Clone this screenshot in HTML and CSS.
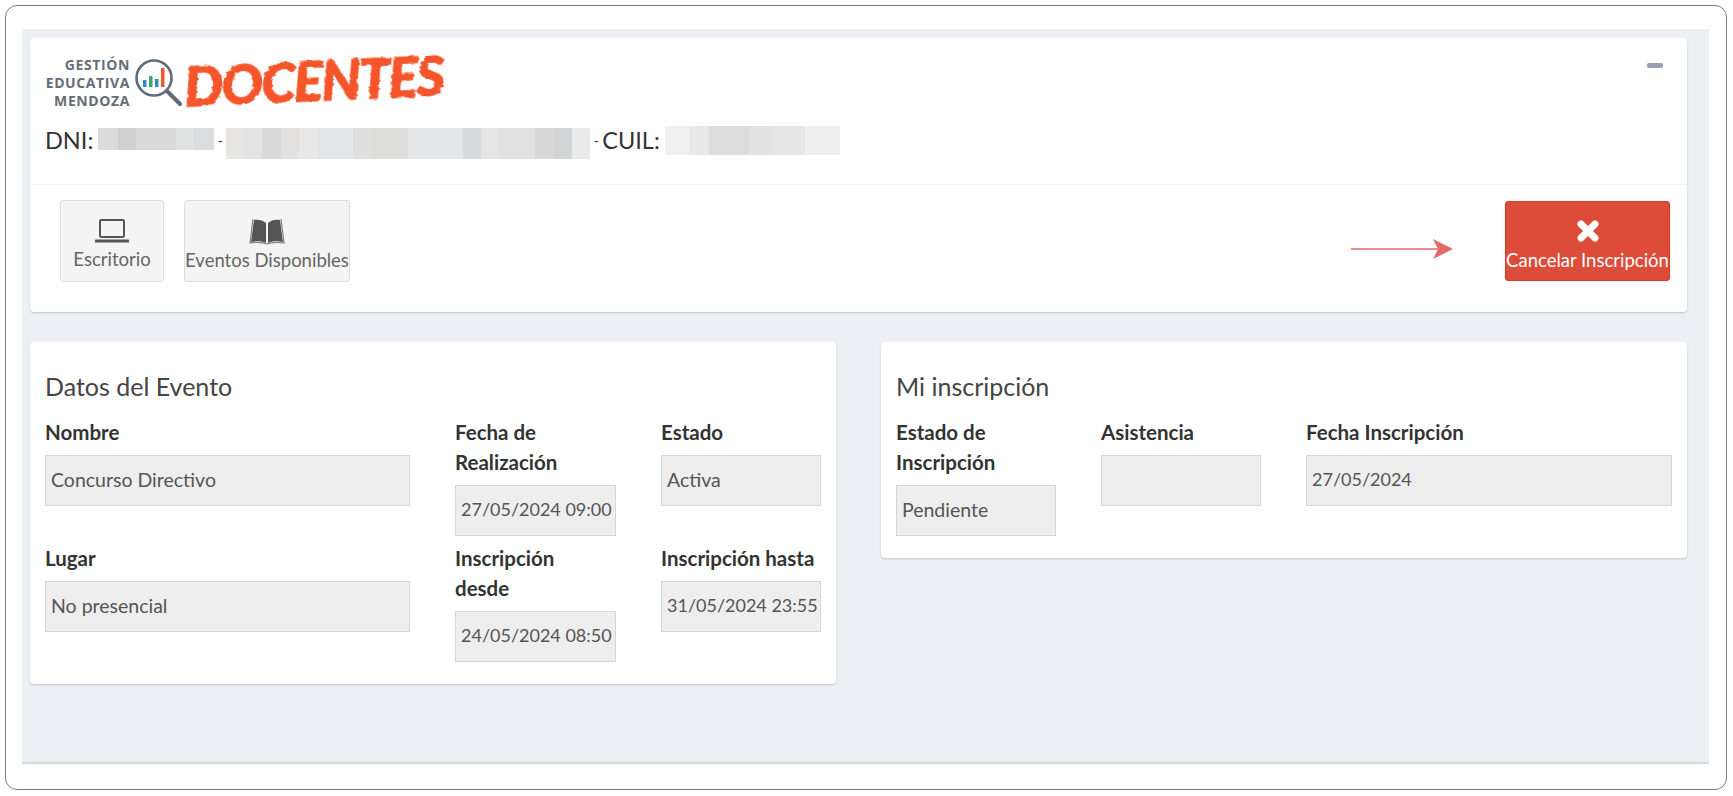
FILE: index.html
```html
<!DOCTYPE html>
<html lang="es">
<head>
    <meta charset="UTF-8">
    <title>Mi inscripción</title>
    <link rel="stylesheet" href="styles.css">
</head>
<body>
    <svg class="defs" width="0" height="0">
        <filter id="brush" x="-5%" y="-10%" width="110%" height="120%">
            <feTurbulence type="fractalNoise" baseFrequency="0.09 0.28" numOctaves="2" seed="4"/>
            <feDisplacementMap in="SourceGraphic" scale="3.5"/>
        </filter>
    </svg>

    <div class="frame">
        <div class="content">
            <div class="card">
                <div class="card-header">
                    <button class="collapse" aria-label="Minimizar"></button>
                    <div class="logo">
                        <div class="logo-text">GESTIÓN<br>EDUCATIVA<br>MENDOZA</div>
                        <svg class="logo-icon" width="50" height="50" viewBox="0 0 50 50">
                            <circle cx="20" cy="21" r="17.5" fill="none" stroke="#5f6b78" stroke-width="2.6"/>
                            <path d="M33 34 L46 47" stroke="#5f6b78" stroke-width="4" stroke-linecap="round"/>
                            <rect x="9" y="23" width="3.5" height="7" fill="#2f8fc4"/>
                            <rect x="15" y="19" width="3.5" height="11" fill="#3aa76d"/>
                            <rect x="21" y="22" width="3.5" height="8" fill="#2f8fc4"/>
                            <rect x="27" y="11" width="3.5" height="19" fill="#ef5a2a"/>
                        </svg>
                        <div class="logo-brand">DOCENTES</div>
                    </div>
                    <div class="person">
                        <span>DNI:</span>
                        <i class="blur blur-dni"></i>
                        <span class="dash">-</span>
                        <i class="blur blur-name"></i>
                        <span class="dash">-</span>
                        <span>CUIL:</span>
                        <i class="blur blur-cuil"></i>
                    </div>
                </div>
                <div class="toolbar">
                    <a class="btn btn-escritorio">
                        <svg width="34" height="26" viewBox="0 0 34 26">
                            <rect x="5" y="2" width="24" height="17" rx="1.5" fill="none" stroke="#555" stroke-width="2"/>
                            <path d="M1 23 H33" stroke="#555" stroke-width="3" stroke-linecap="round"/>
                        </svg>
                        Escritorio
                    </a>
                    <a class="btn btn-eventos">
                        <svg width="36" height="28" viewBox="0 0 36 28">
                            <path d="M17 6 C14 3 9 2 5 3 L2 25 C7 24 13 24 17 26 Z M19 6 C22 3 27 2 31 3 L34 25 C29 24 23 24 19 26 Z" fill="#555"/>
                            <path d="M4 2 L1 26 C7 25 13 25 18 27 C23 25 29 25 35 26 L32 2" stroke="#8f8072" stroke-width="1.2" fill="none"/>
                        </svg>
                        Eventos Disponibles
                    </a>
                    <svg class="arrow" width="104" height="24" viewBox="0 0 104 24">
                        <path d="M1 12 H90" stroke="#e36b6b" stroke-width="1.6"/>
                        <path d="M83 2 L103 12 L83 22 L88 12 Z" fill="#e36b6b"/>
                    </svg>
                    <a class="btn btn-cancelar">
                        <svg width="24" height="24" viewBox="0 0 24 24">
                            <path d="M5 5 L19 19 M19 5 L5 19" stroke="#fff" stroke-width="7" stroke-linecap="round"/>
                        </svg>
                        Cancelar Inscripción
                    </a>
                </div>
            </div>

            <div class="columns">
                <div class="card panel">
                    <h3>Datos del Evento</h3>
                    <div class="fields fields-evento">
                        <div class="field">
                            <label>Nombre</label>
                            <div class="value">Concurso Directivo</div>
                        </div>
                        <div class="field">
                            <label>Fecha de Realización</label>
                            <div class="value value-date">27/05/2024 09:00</div>
                        </div>
                        <div class="field">
                            <label>Estado</label>
                            <div class="value">Activa</div>
                        </div>
                        <div class="field">
                            <label>Lugar</label>
                            <div class="value">No presencial</div>
                        </div>
                        <div class="field">
                            <label>Inscripción<br>desde</label>
                            <div class="value value-date">24/05/2024 08:50</div>
                        </div>
                        <div class="field">
                            <label>Inscripción hasta</label>
                            <div class="value value-date">31/05/2024 23:55</div>
                        </div>
                    </div>
                </div>

                <div class="card panel">
                    <h3>Mi inscripción</h3>
                    <div class="fields fields-inscripcion">
                        <div class="field">
                            <label>Estado de Inscripción</label>
                            <div class="value">Pendiente</div>
                        </div>
                        <div class="field">
                            <label>Asistencia</label>
                            <div class="value"></div>
                        </div>
                        <div class="field">
                            <label>Fecha Inscripción</label>
                            <div class="value value-date">27/05/2024</div>
                        </div>
                    </div>
                </div>
            </div>
        </div>
    </div>
</body>
</html>
```

FILE: styles.css
```css
* {
    box-sizing: border-box;
}

body {
    margin: 0;
    font-family: Lato, "Open Sans", sans-serif;
    color: #333;
    background-color: #fff;
}

.defs {
    position: absolute;
}

.frame {
    display: flex;
    flex-direction: column;
    height: 785px;
    margin: 5px 6px 6px 5px;
    padding: 23px 17px 25px 16px;
    border: 1px solid #7d7d7d;
    border-radius: 12px;
}

.content {
    flex: 1;
    padding: 9px 22px 0 8px;
    background-color: #ecf0f5;
    border-bottom: 2px solid #d5d9e0;
}

.card {
    background-color: #fff;
    border-radius: 4px;
    box-shadow: 0 1px 2px rgba(0,0,0,0.18);
}

.card-header {
    position: relative;
    height: 147px;
    padding: 12px 15px 0;
    border-bottom: 1px solid #f2f2f2;
}

.collapse {
    position: absolute;
    top: 25px;
    right: 24px;
    width: 16px;
    height: 5px;
    padding: 0;
    border: none;
    border-radius: 2px;
    background-color: #97a0b3;
}

.logo {
    display: flex;
    align-items: center;
    height: 60px;
}

.logo-text {
    width: 85px;
    margin-top: 5px;
    font-family: "Open Sans", sans-serif;
    font-size: 14px;
    font-weight: 700;
    line-height: 18px;
    letter-spacing: 0.6px;
    text-align: right;
    white-space: nowrap;
    color: #666d78;
}

.logo-icon {
    margin: 4px 0 0 4px;
}

.logo-brand {
    margin-left: 0;
    font-family: Lato, sans-serif;
    font-size: 55px;
    font-weight: 900;
    font-style: italic;
    line-height: 60px;
    letter-spacing: -1.7px;
    color: #f4552a;
    -webkit-text-stroke: 1px #f4552a;
    transform: rotate(-2.5deg);
    filter: url(#brush);
}

.person {
    display: flex;
    align-items: flex-start;
    height: 35px;
    margin-top: 13px;
    font-size: 23.5px;
    line-height: 35px;
    color: #333;
}

.dash {
    width: 12px;
    font-size: 14px;
    text-align: center;
}

.blur {
    display: block;
    margin-top: 5px;
}

.blur-dni {
    width: 116px;
    height: 22px;
    margin-left: 5px;
    background: linear-gradient(90deg, #dbdbdb 0 17%, #cfcfcf 17% 33%, #dadada 33% 67%, #e0e2e2 67% 83%, #dcdde0 83%);
}

.blur-name {
    width: 364px;
    height: 31px;
    background: linear-gradient(90deg, #e8e6e4 0 5%, #e2e3e5 5% 10%, #d9d9da 10% 15%, #e3e1e0 15% 20%, #e8e8e8 20% 25%, #e4e5e6 25% 35%, #dfdfdf 35% 40%, #dddddc 40% 50%, #e4e6e8 50% 65%, #d9dadb 65% 70%, #e5e5e5 70% 75%, #e1e1e1 75% 85%, #d7d7d7 85% 90%, #d3d4d6 90% 95%, #eaeaea 95%);
}

.blur-cuil {
    width: 175px;
    height: 29px;
    margin-top: 3px;
    margin-left: 5px;
    background: linear-gradient(90deg, #f0f0f0 0 14%, #e8e8e8 14% 25%, #dcdcdc 25% 48%, #e2e2e2 48% 62%, #e6e6e6 62% 80%, #efefef 80%);
}

.toolbar {
    display: flex;
    align-items: center;
    height: 127px;
    padding: 0 17px 15px 30px;
}

.btn {
    display: flex;
    flex-direction: column;
    align-items: center;
    justify-content: center;
    gap: 3px;
    height: 82px;
    padding-top: 7px;
    font-size: 18.5px;
    line-height: 24px;
    white-space: nowrap;
    color: #666;
    background-color: #f4f4f4;
    border: 1px solid #ddd;
    border-radius: 3px;
}

.btn-escritorio {
    width: 104px;
}

.btn-eventos {
    width: 166px;
    margin-left: 20px;
}

.btn-cancelar {
    width: 165px;
    height: 80px;
    gap: 5px;
    padding-top: 9px;
    color: #fff;
    background-color: #dd4b39;
    border-color: #d73925;
}

.arrow {
    margin: 16px 51px 0 auto;
}

.columns {
    display: grid;
    grid-template-columns: 1fr 1fr;
    gap: 45px;
    align-items: start;
    margin-top: 30px;
}

.panel {
    padding: 30px 15px 22px;
}

h3 {
    margin: 0 0 18px;
    font-size: 25px;
    font-weight: 400;
    line-height: 28px;
    color: #444;
}

.fields {
    display: grid;
    gap: 8px 45px;
    align-items: start;
}

.fields-evento {
    grid-template-columns: 365px 161px 160px;
}

.fields-inscripcion {
    grid-template-columns: 160px 160px 366px;
}

.field label {
    display: block;
    margin: -1px 0 8px;
    font-size: 20.5px;
    font-weight: 700;
    line-height: 30px;
}

.value {
    height: 51px;
    padding: 0 5px;
    font-size: 19.5px;
    line-height: 47px;
    white-space: nowrap;
    color: #555;
    background-color: #eee;
    border: 1px solid #d2d6de;
}

.value-date {
    font-size: 18px;
}
```
